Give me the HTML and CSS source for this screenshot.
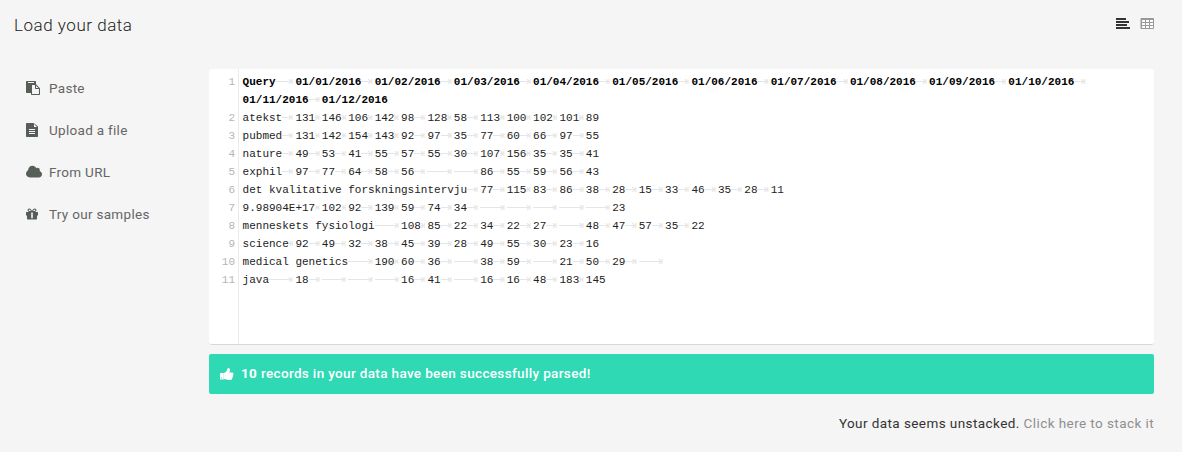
FILE: index.html
```html
<!DOCTYPE html>
<html lang="en">
<head>
<meta charset="utf-8">
<title>Load your data</title>
<link rel="stylesheet" href="styles.css">
</head>
<body>
<header class="header">
  <h1 class="title"><span class="t-title">Load your data</span></h1>
  <div class="views">
    <svg class="view view-text" width="14" height="14" viewBox="0 0 14 14"><path d="M0 1h10v2H0zM0 4h13v2H0zM0 7h11v2H0zM0 10h14v2H0z"/></svg>
    <svg class="view view-table" width="14" height="14" viewBox="0 0 14 14"><path class="cells" d="M2 3h11v8H2z"/><path fill-rule="evenodd" d="M1.200 1h12.100q.7 0 .7.700v9.600q0 .7-.7.700H1.200q-.7 0-.7-.7V1.700q0-.7.7-.7zM2 3v2h3V3zM6 3v2h3V3zM10 3v2h3V3zM2 6v2h3V6zM6 6v2h3V6zM10 6v2h3V6zM2 9v2h3V9zM6 9v2h3V9zM10 9v2h3V9z"/></svg>
  </div>
</header>
<div class="layout">
  <nav class="menu">
    <a class="item"><svg class="icon" viewBox="0 0 1792 1792" preserveAspectRatio="xMinYMid meet"><path d="M768 1664h896v-640h-416q-40 0-68-28t-28-68V512H768v1152zm256-1440v-64q0-13-9.500-22.500T992 128H288q-13 0-22.500 9.500T256 160v64q0 13 9.500 22.500T288 256h704q13 0 22.500-9.500T1024 224zm256 672h299l-299-299v299zm512 128v672q0 40-28 68t-68 28H736q-40 0-68-28t-28-68v-160H96q-40 0-68-28t-28-68V96q0-40 28-68T96 0h1088q40 0 68 28t28 68v328q21 13 36 28l408 408q28 28 48 76t20 88z"/></svg><span class="t-paste">Paste</span></a>
    <a class="item"><svg class="icon" viewBox="0 0 1792 1792" preserveAspectRatio="xMinYMid meet"><path d="M1468 380q28 28 48 76t20 88v1152q0 40-28 68t-68 28H96q-40 0-68-28t-28-68V96q0-40 28-68T96 0h800q40 0 88 20t76 48zM1024 136v376h376q-10-29-22-41l-313-313q-12-12-41-22zM384 800v64q0 14 9 23t23 9h704q14 0 23-9t9-23v-64q0-14-9-23t-23-9H416q-14 0-23 9t-9 23zm736 224H416q-14 0-23 9t-9 23v64q0 14 9 23t23 9h704q14 0 23-9t9-23v-64q0-14-9-23t-23-9zm0 256H416q-14 0-23 9t-9 23v64q0 14 9 23t23 9h704q14 0 23-9t9-23v-64q0-14-9-23t-23-9z" fill-rule="evenodd"/></svg><span class="t-upload">Upload a file</span></a>
    <a class="item"><svg class="icon" viewBox="0 250 1920 1400" preserveAspectRatio="xMinYMid meet"><path d="M1920 1216q0 159-112.500 271.500T1536 1600H448q-185 0-316.500-131.500T0 1152q0-132 71-241.500T258 747q-2-28-2-43 0-212 150-362t362-150q158 0 286.500 88T1242 510q70-62 166-62 106 0 181 75t75 181q0 75-41 138 129 30 213 134.500t84 239.500z"/></svg><span class="t-url">From URL</span></a>
    <a class="item"><svg class="icon" viewBox="0 0 14 14" preserveAspectRatio="xMinYMid meet"><path fill-rule="evenodd" d="M0 5.500q0-.5.500-.5H3.500Q1.500 4.800 1.500 3.200 1.500 1.500 3.300 1.500 4.300 1.500 5 2.400L6 3.700 7 2.400q.7-.9 1.700-.9 1.800 0 1.800 1.700Q10.500 4.800 8.500 5h3q.5 0 .5.500V8.500h-1v3.300q0 .7-.7.700H1.700Q1 12.500 1 11.800V8.500H0zM3.400 2.500q-.8 0-.8.800t.8.800H5.100L4.100 2.900q-.3-.4-.7-.4zM8.600 2.500q-.4 0-.7.400L6.900 4.100H8.600q.8 0 .8-.8t-.8-.8zM5.200 5.500V11.300H6.800V5.500z"/></svg><span class="t-samples">Try our samples</span></a>
  </nav>
  <main class="main">
    <div class="editor" id="editor"></div>
    <div class="notice">
      <svg class="thumb" width="14" height="14" viewBox="0 0 14 14"><path fill-rule="evenodd" d="M0 6h3.600v6.500H0zM1 10.500v1h1v-1zM3.800 6.200Q6.200 5 7 3.200 7.300 1 8.400 1 10 1 10 3q0 1-.7 2.400h3Q13.500 5.500 13.500 6.800q0 .6-.4 1 .3.900-.3 1.600.1.900-.5 1.500 0 2-2.100 2-2.600.1-4.600-.6-.7-.2-1.800-.2z"/></svg>
      <span class="t-notice"><b>10</b> records in your data have been successfully parsed!</span>
    </div>
    <p class="hint"><span class="t-hint">Your data seems unstacked.</span> <a class="t-stack">Click here to stack it</a></p>
  </main>
</div>
<script src="editor.js"></script>
</body>
</html>
```
FILE: styles.css
```css
* { box-sizing: border-box; }
body { margin: 0; height: 452px; background: #f5f5f5; color: #333; font: 13.5px/20px Roboto, "Liberation Sans", sans-serif; overflow: hidden; }
.header { display: flex; justify-content: space-between; padding: 13px 28px 0 14px; height: 69px; }
.title { margin: 0; font-size: 17px; line-height: 24px; font-weight: 300; letter-spacing: .53px; color: #222; }
.views { display: flex; gap: 10px; padding-top: 4px; }
.view-text { fill: #333; }
.view-table { fill: #999; }
.cells { fill: #fff; }
.layout { display: flex; padding-right: 28px; }
.menu { width: 209px; padding: 9px 0 0 25.5px; display: flex; flex-direction: column; gap: 22px; flex: none; }
.item { display: flex; align-items: center; height: 20px; gap: 7.5px; color: #666; letter-spacing: .3px; }
.icon { width: 16px; height: 14px; fill: #575d57; overflow: visible; }
.main { flex: 1; }
.editor { height: 276px; padding-top: 4px; background: linear-gradient(90deg, #fff 29px, #ebebeb 29px, #ebebeb 30px, #fff 30px); border-bottom: 1px solid #d8d8d8; border-radius: 3px; font: 11px/18px "Liberation Mono", monospace; color: #222; }
.row { display: flex; height: 18px; }
.number { width: 26px; text-align: right; color: #b5b5b5; margin-right: 7.6px; flex: none; }
.code { white-space: pre; tab-size: 4; }
.head { font-weight: bold; color: #000; }
.tab { background: url("data:image/svg+xml,%3Csvg xmlns='http://www.w3.org/2000/svg' width='80' height='12'%3E%3Cpath d='M0 5.500H75M73.800 3.200l2.300 2.300l-2.300 2.300M77 3v5' fill='none' stroke='%23e5e5e5' stroke-width='1.1'/%3E%3C/svg%3E") no-repeat right center; }
.notice { display: flex; align-items: center; height: 40px; margin-top: 9px; padding-left: 11px; gap: 7px; border-radius: 2px; background: #2ed9b3; color: #fff; font-weight: 500; letter-spacing: .35px; }
.t-notice { padding-bottom: 2px; }
.thumb { fill: #fff; }
.hint { margin: 19px 0 0; text-align: right; letter-spacing: .42px; }
.t-stack { color: #8f8f8f; }
```
FILE: editor.js
```js
const rows = [
  [1, "Query\t01/01/2016\t01/02/2016\t01/03/2016\t01/04/2016\t01/05/2016\t01/06/2016\t01/07/2016\t01/08/2016\t01/09/2016\t01/10/2016\t"],
  ["", "01/11/2016\t01/12/2016"],
  [2, "atekst\t131\t146\t106\t142\t98\t128\t58\t113\t100\t102\t101\t89"],
  [3, "pubmed\t131\t142\t154\t143\t92\t97\t35\t77\t60\t66\t97\t55"],
  [4, "nature\t49\t53\t41\t55\t57\t55\t30\t107\t156\t35\t35\t41"],
  [5, "exphil\t97\t77\t64\t58\t56\t\t\t86\t55\t59\t56\t43"],
  [6, "det kvalitative forskningsintervju\t77\t115\t83\t86\t38\t28\t15\t33\t46\t35\t28\t11"],
  [7, "9.98904E+17\t102\t92\t139\t59\t74\t34\t\t\t\t\t\t23"],
  [8, "menneskets fysiologi\t108\t85\t22\t34\t22\t27\t\t48\t47\t57\t35\t22"],
  [9, "science\t92\t49\t32\t38\t45\t39\t28\t49\t55\t30\t23\t16"],
  [10, "medical genetics\t190\t60\t36\t\t38\t59\t\t21\t50\t29\t\t"],
  [11, "java\t18\t\t\t\t16\t41\t\t16\t16\t48\t183\t145"]
];
document.getElementById("editor").innerHTML = rows.map(([number, text], i) =>
  `<div class="row"><span class="number">${number}</span><span class="code${i < 2 ? " head" : ""}">${text.replace(/\t/g, '<span class="tab">\t</span>')}</span></div>`
).join("");
```
